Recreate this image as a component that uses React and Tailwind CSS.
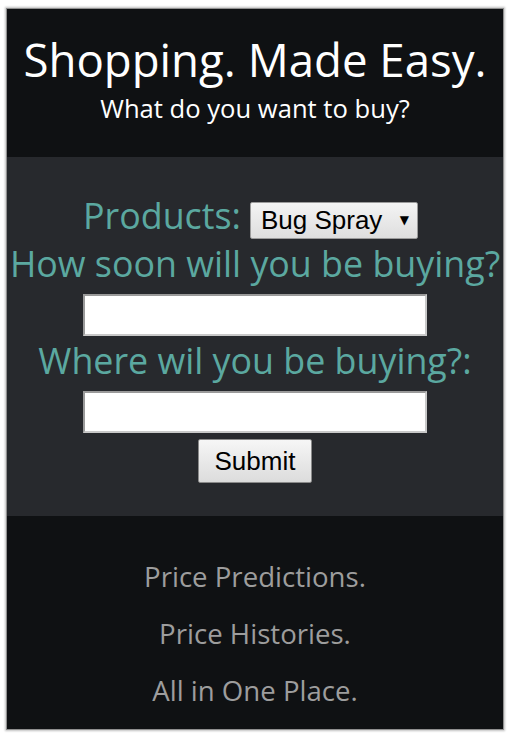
export default function App() {
  return (
    <div className="min-h-[733px] bg-white pt-[8px] pl-[6px] pr-[3px] pb-[4px] font-['Open_Sans',sans-serif]">
      <div className="w-[498px] border border-[#8f8f8f] shadow-[0_0_2px_1px_rgba(0,0,0,0.25)]">
        {/* Cabecera */}
        <header className="bg-[#0f1113] pt-[25px] pb-[33px] text-center text-white">
          <h1 className="text-[45.6px] leading-[50px] font-normal">Shopping. Made Easy.</h1>
          <p className="mt-[10px] text-[25.6px] leading-[30px]">What do you want to buy?</p>
        </header>

        {/* Formulario */}
        <form className="flex flex-col items-center bg-[#27292d] pt-[37px] pb-[33px] text-[#5ba8a0]">
          <div className="flex items-baseline justify-center gap-[9px] pr-[9px]">
            <label className="text-[35.8px] leading-[42px]">Products:</label>
            <div className="relative">
              <select
                defaultValue="bug"
                className="h-[37px] w-[168px] appearance-none rounded-[2px] border border-[#9b9b9b] bg-gradient-to-b from-[#f4f4f4] to-[#dedede] pl-[10px] font-['Liberation_Sans',Arial,sans-serif] text-[26px] leading-[35px] text-black"
              >
                <option value="bug">Bug Spray</option>
                <option value="sun">Sunscreen</option>
              </select>
              <span className="pointer-events-none absolute right-[9px] top-[9px] font-['DejaVu_Sans',sans-serif] text-[12px] leading-[18px] text-black">
                ▼
              </span>
            </div>
          </div>

          <label className="mt-[3px] text-[35.8px] leading-[42px]">How soon will you be buying?</label>
          <input
            type="text"
            className="mt-[10px] h-[42px] w-[344px] border-2 border-[#c8c8c8] border-t-[#9a9a9a] border-l-[#9a9a9a] bg-white"
          />

          <label className="mt-[3px] text-[35.8px] leading-[42px]">Where wil you be buying?:</label>
          <input
            type="text"
            className="mt-[10px] h-[42px] w-[344px] border-2 border-[#c8c8c8] border-t-[#9a9a9a] border-l-[#9a9a9a] bg-white"
          />

          <button
            type="button"
            className="mt-[6px] h-[44px] w-[114px] rounded-[2px] border border-[#8a8a8a] bg-gradient-to-b from-[#f6f6f6] to-[#dcdcdc] font-['Liberation_Sans',Arial,sans-serif] text-[26px] leading-[30px] text-black"
          >
            Submit
          </button>
        </form>

        {/* Pie */}
        <footer className="flex flex-col items-center gap-[25px] bg-[#0f1113] pt-[44px] pb-[23px] text-[27.6px] leading-[32px] text-[#9d9d9d]">
          <p>Price Predictions.</p>
          <p>Price Histories.</p>
          <p>All in One Place.</p>
        </footer>
      </div>
    </div>
  )
}
